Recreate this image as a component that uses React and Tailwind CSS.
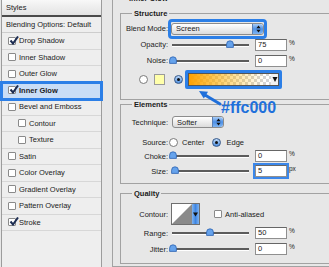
import React from "react";

const styleRows = [
  { name: "Drop Shadow", checked: true },
  { name: "Inner Shadow" },
  { name: "Outer Glow" },
  { name: "Inner Glow", checked: true, active: true },
  { name: "Bevel and Emboss" },
  { name: "Contour", indent: true },
  { name: "Texture", indent: true },
  { name: "Satin" },
  { name: "Color Overlay" },
  { name: "Gradient Overlay" },
  { name: "Pattern Overlay" },
  { name: "Stroke", checked: true },
];

function CheckBox({ checked, className = "" }) {
  return (
    <span className={`relative block w-[8px] h-[8px] shrink-0 bg-white border border-[#8a8a8a] rounded-[1px] ${className}`}>
      {checked && (
        <svg className="absolute -top-[2px] left-0 w-[10px] h-[9px]" viewBox="0 0 10 9">
          <path d="M1.5 4.5 L4 7.5 L9 0.5" fill="none" stroke="#1d2d52" strokeWidth="2" />
        </svg>
      )}
    </span>
  );
}

function StylesList() {
  return (
    <div className="ml-[1px] w-[101px] shrink-0 h-full flex flex-col bg-[#eeeeee] border-x border-[#9c9c9c]">
      <div className="h-[15px] shrink-0 flex items-center px-[4px] bg-gradient-to-b from-[#f8f8f8] to-[#e3e3e3]">Styles</div>
      <div className="h-[2px] shrink-0 bg-[#4a4a4a]" />
      <div className="h-[16px] shrink-0 flex items-center px-[4px] border-b border-[#cdcdcd]">Blending Options: Default</div>
      {styleRows.map((row) => (
        <div
          key={row.name}
          className={`h-[16.5px] shrink-0 flex items-center gap-[3px] border-b border-[#d7d7d7] ${row.indent ? "pl-[16px]" : "pl-[6px]"} ${
            row.active ? "relative z-10 bg-[#c9ddf6] outline-[3px] outline-solid outline-[#2c7fe7] -outline-offset-1" : ""
          }`}
        >
          <CheckBox checked={row.checked} />
          <span className={row.active ? "font-bold" : ""}>{row.name}</span>
        </div>
      ))}
    </div>
  );
}

function Slider({ pos }) {
  return (
    <div className="relative ml-[4px] w-[77px] h-[12px] shrink-0">
      <div className="absolute left-0 right-0 top-[5px] h-[2px] bg-[#5c5c5c] shadow-[0_1px_0_#ffffff]" />
      <svg className="absolute top-[1px] w-[8px] h-[8px]" style={{ left: pos - 4 }} viewBox="0 0 8 8">
        <path d="M0.6 7.4 V4.2 A3.4 3.4 0 0 1 7.4 4.2 V7.4 Z" fill="#66a3ec" stroke="#2d62b0" strokeWidth="0.8" />
      </svg>
    </div>
  );
}

function NumField({ value, unit, focus }) {
  return (
    <div className="flex items-start ml-[6px]">
      <div
        className={`w-[32px] h-[12px] bg-white border border-[#8f8f8f] border-t-[#666666] pl-[2px] leading-[10px] ${
          focus ? "outline-2 outline-solid outline-[#3b87ea]" : ""
        }`}
      >
        {value}
      </div>
      <span className="ml-[2px] text-[6.5px] leading-[7px]">{unit}</span>
    </div>
  );
}

function Label({ children }) {
  return <span className="w-[47px] shrink-0 text-right">{children}</span>;
}

function SliderRow({ label, pos, value, unit, focus, className }) {
  return (
    <div className={`flex items-center ${className}`}>
      <Label>{label}</Label>
      <Slider pos={pos} />
      <NumField value={value} unit={unit} focus={focus} />
    </div>
  );
}

function Arrows() {
  return (
    <span className="w-[11px] h-full shrink-0 flex items-center justify-center rounded-r-[3px] bg-gradient-to-b from-[#a9cdf6] via-[#4d90e6] to-[#7fb5f2] border-l border-[#5a7fb3]">
      <svg className="w-[5px] h-[8px]" viewBox="0 0 5 8">
        <path d="M2.5 0.5 L4.6 3.2 H0.4 Z M2.5 7.5 L4.6 4.8 H0.4 Z" fill="#111" />
      </svg>
    </span>
  );
}

function Radio({ selected, className = "" }) {
  return selected ? (
    <span className={`w-[9px] h-[9px] shrink-0 rounded-full border border-[#35588a] bg-gradient-to-b from-[#bcd8f8] to-[#4f8fde] flex items-center justify-center ${className}`}>
      <span className="w-[3px] h-[3px] rounded-full bg-[#111]" />
    </span>
  ) : (
    <span className={`block w-[9px] h-[9px] shrink-0 rounded-full border border-[#7a7a7a] bg-white ${className}`} />
  );
}

function GradientSwatch() {
  return (
    <svg className="block w-full h-full" viewBox="0 0 91 13" preserveAspectRatio="none">
      <defs>
        <pattern id="chk" width="6" height="6" patternUnits="userSpaceOnUse">
          <rect width="6" height="6" fill="#ffffff" />
          <rect width="3" height="3" fill="#d4d4d4" />
          <rect x="3" y="3" width="3" height="3" fill="#d4d4d4" />
        </pattern>
        <linearGradient id="glow" x1="0" x2="1" y1="0" y2="0">
          <stop offset="0" stopColor="#ffa000" stopOpacity="1" />
          <stop offset="0.85" stopColor="#ffc000" stopOpacity="0" />
        </linearGradient>
      </defs>
      <rect width="91" height="13" fill="url(#chk)" />
      <rect width="91" height="13" fill="url(#glow)" />
      <rect x="83" y="0" width="8" height="13" fill="#f2f2f2" />
      <path d="M84.5 4 H89.5 L87 9 Z" fill="#111" />
      <rect x="0.5" y="0.5" width="90" height="12" fill="none" stroke="#555" />
    </svg>
  );
}

function Structure() {
  return (
    <fieldset className="mt-[5.5px] w-[230px] border border-[#a2a2a2] pt-[1px] pb-[6px]">
      <legend className="ml-[11px] px-[2px] font-bold">Structure</legend>
      <div className="h-[20px] flex items-center">
        <Label>Blend Mode:</Label>
        <div className="w-[99px] h-[20px] border-[3px] border-[#2c7fe7] rounded-[4px] py-[1px] flex">
          <div className="flex-1 flex items-center rounded-[3px] border border-[#8c8c8c] bg-gradient-to-b from-white to-[#dcdcdc]">
            <span className="flex-1 pl-[4px]">Screen</span>
            <Arrows />
          </div>
        </div>
      </div>
      <SliderRow label="Opacity:" pos={58} value="75" unit="%" className="h-[12px]" />
      <SliderRow label="Noise:" pos={1} value="0" unit="%" className="h-[12px] mt-[4px]" />
      <div className="h-[26px] flex items-center pl-[18px]">
        <Radio />
        <span className="ml-[6px] w-[11px] h-[11px] shrink-0 bg-[#ffffaa] border border-[#9a9a9a]" />
        <Radio selected className="ml-[9px]" />
        <div className="ml-[2px] w-[97px] h-[19px] border-[3px] border-[#2c7fe7] rounded-[2px]">
          <GradientSwatch />
        </div>
      </div>
    </fieldset>
  );
}

function Elements() {
  return (
    <fieldset className="w-[230px] border border-[#a2a2a2] pt-[4.5px] pb-[6px]">
      <legend className="ml-[11px] px-[2px] font-bold">Elements</legend>
      <div className="h-[18px] flex items-center">
        <Label>Technique:</Label>
        <div className="ml-[4px] w-[52px] h-[12px] flex items-center rounded-[3px] border border-[#8c8c8c] bg-gradient-to-b from-white to-[#dcdcdc]">
          <span className="flex-1 pl-[4px]">Softer</span>
          <Arrows />
        </div>
      </div>
      <div className="h-[12px] mt-[5px] flex items-center">
        <Label>Source:</Label>
        <Radio className="ml-[1px]" />
        <span className="ml-[4px]">Center</span>
        <Radio selected className="ml-[7px]" />
        <span className="ml-[6px]">Edge</span>
      </div>
      <SliderRow label="Choke:" pos={1} value="0" unit="%" className="h-[12px] mt-[2px]" />
      <SliderRow label="Size:" pos={3} value="5" unit="px" focus className="h-[12px] mt-[3px]" />
    </fieldset>
  );
}

function Quality() {
  return (
    <fieldset className="mt-[4.5px] w-[230px] border border-[#a2a2a2] pt-[5.5px] pb-[8px]">
      <legend className="ml-[11px] px-[2px] font-bold">Quality</legend>
      <div className="h-[22px] flex items-center">
        <Label>Contour:</Label>
        <div className="ml-[3px] w-[29px] h-[22px] flex border border-[#6f6f6f]">
          <svg className="block w-[20px] h-full" viewBox="0 0 20 20" preserveAspectRatio="none">
            <rect width="20" height="20" fill="#ffffff" />
            <path d="M0 20 L20 0 V20 Z" fill="#8a8a8a" />
          </svg>
          <span className="flex-1 flex items-center justify-center bg-gradient-to-r from-[#7fb3ef] via-[#3e86e3] to-[#7fb3ef]">
            <svg className="w-[5px] h-[5px]" viewBox="0 0 5 5">
              <path d="M0 0.5 H5 L2.5 4.5 Z" fill="#111" />
            </svg>
          </span>
        </div>
        <CheckBox className="ml-[14px]" />
        <span className="ml-[3px]">Anti-aliased</span>
      </div>
      <SliderRow label="Range:" pos={38} value="50" unit="%" className="h-[12px] mt-[2px]" />
      <SliderRow label="Jitter:" pos={1} value="0" unit="%" className="h-[12px] mt-[4px]" />
    </fieldset>
  );
}

function Annotation() {
  return (
    <>
      <svg className="absolute left-[194px] top-[86px] w-[32px] h-[22px]" viewBox="0 0 32 22">
        <path d="M26 18 L11 9" stroke="#1f6fda" strokeWidth="3" strokeLinecap="round" />
        <path d="M5 5 L14 5.7 L9.8 12.5 Z" fill="#1f6fda" />
      </svg>
      <div className="absolute left-[221px] top-[100px] text-[16px] leading-[16px] font-bold text-[#1f70db]">#ffc000</div>
    </>
  );
}

export default function App() {
  return (
    <div className="relative w-[329px] h-[267px] overflow-hidden flex bg-[#e7e7e7] text-[#1b1b1b] text-[7.5px] leading-[9px] font-['Liberation_Sans',Arial,sans-serif]">
      <StylesList />
      <div className="flex-1 min-w-0 overflow-hidden pl-[10px]">
        <fieldset className="w-[240px] -mt-[6px] border border-[#a2a2a2] pl-[7px] pb-[2px]">
          <legend className="ml-[8px] px-[1px] font-bold">Inner Glow</legend>
          <Structure />
          <Elements />
          <Quality />
        </fieldset>
      </div>
      <Annotation />
    </div>
  );
}
